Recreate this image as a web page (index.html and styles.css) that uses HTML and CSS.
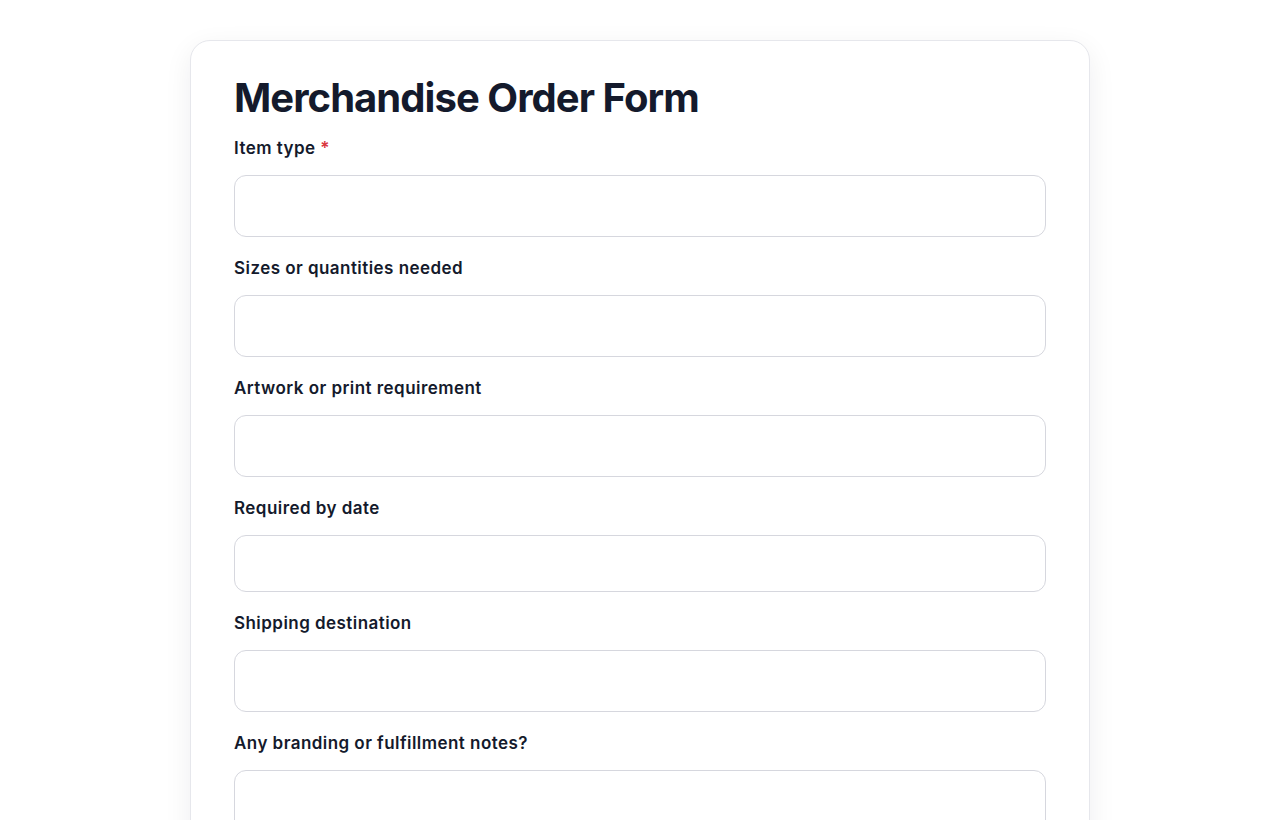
FILE: index.html
```html
<!DOCTYPE html>
<html lang="en">
<head>
<meta charset="utf-8">
<title>Merchandise Order Form</title>
<link rel="stylesheet" href="styles.css">
</head>
<body>
<main class="page">
  <form class="card">
    <h1 class="title">Merchandise Order Form</h1>
    <div class="field">
      <label class="label" for="f1">Item type <span class="req">*</span></label>
      <input class="input" id="f1" type="text">
    </div>
    <div class="field">
      <label class="label" for="f2">Sizes or quantities needed</label>
      <input class="input" id="f2" type="text">
    </div>
    <div class="field">
      <label class="label" for="f3">Artwork or print requirement</label>
      <input class="input" id="f3" type="text">
    </div>
    <div class="field">
      <label class="label" for="f4">Required by date</label>
      <input class="input input-date" id="f4" type="text">
    </div>
    <div class="field">
      <label class="label" for="f5">Shipping destination</label>
      <input class="input" id="f5" type="text">
    </div>
    <div class="field">
      <label class="label" for="f6">Any branding or fulfillment notes?</label>
      <textarea class="input textarea" id="f6"></textarea>
    </div>
  </form>
</main>
</body>
</html>
```
FILE: styles.css
```css
* { box-sizing: border-box; }
html, body { margin: 0; padding: 0; background: #ffffff; }
body {
  font-family: Inter, "Noto Sans", "Liberation Sans", sans-serif;
  color: #141a2c;
}
.page {
  display: flex;
  justify-content: center;
  padding-top: 40px;
}
.card {
  width: 900px;
  background: #ffffff;
  border: 1px solid #e6e7ec;
  border-radius: 20px;
  padding: 33px 43px 40px;
  box-shadow: 0 8px 28px rgba(20, 26, 44, 0.07);
}
.title {
  margin: 0 0 14px;
  font-size: 40px;
  line-height: 48px;
  font-weight: 650;
  letter-spacing: -0.95px;
  color: #141a2c;
}
.field {
  display: flex;
  flex-direction: column;
  margin-bottom: 19px;
}
.label {
  font-size: 17px;
  line-height: 24px;
  font-weight: 600;
  letter-spacing: 0.45px;
  margin-bottom: 15px;
  color: #141a2c;
}
.req { color: #d9363e; }
.input {
  display: block;
  width: 100%;
  height: 62px;
  border: 1px solid #d6d7de;
  border-radius: 12px;
  background: #ffffff;
  font: inherit;
  padding: 0 16px;
  outline: none;
}
.input-date { height: 57px; }
.textarea { height: 110px; resize: none; }
```
